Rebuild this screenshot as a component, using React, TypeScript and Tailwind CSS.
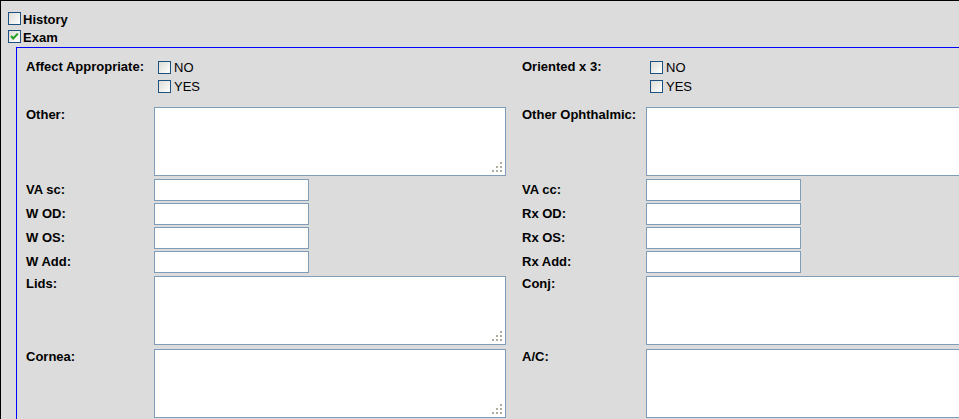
import React from "react";

function Box({ checked = false }: { checked?: boolean }) {
  return (
    <span className="w-[13px] h-[13px] shrink-0 border border-[#1c5180] bg-gradient-to-br from-[#dcdcd7] to-[#ffffff] flex items-center justify-center">
      {checked && (
        <svg width="11" height="11" viewBox="0 0 11 11">
          <polyline points="2,5 4.2,7.5 8.8,2.6" fill="none" stroke="#21a121" strokeWidth="2" />
        </svg>
      )}
    </span>
  );
}

function Grip() {
  const dots = [
    [8, 0],
    [4, 4],
    [8, 4],
    [0, 8],
    [4, 8],
    [8, 8],
  ];
  return (
    <svg className="absolute right-[3px] bottom-[3px]" width="10" height="10" viewBox="0 0 10 10">
      {dots.map(([x, y], i) => (
        <rect key={i} x={x} y={y} width="2" height="2" fill="#b0ad9e" />
      ))}
    </svg>
  );
}

function Area({ grip = true }: { grip?: boolean }) {
  return (
    <div className="relative w-[352px] h-[69px] shrink-0 border border-[#7f9db9] bg-white">
      <textarea className="w-full h-full resize-none outline-none bg-transparent block" />
      {grip && <Grip />}
    </div>
  );
}

function Input() {
  return (
    <input
      type="text"
      className="block w-[155px] h-[22px] border border-[#7f9db9] bg-white outline-none"
    />
  );
}

function Option({ text }: { text: string }) {
  return (
    <div className="flex items-start gap-[3px] h-[19px]">
      <span className="mt-[3px]">
        <Box />
      </span>
      <span className="mt-[3px] leading-[14px]">{text}</span>
    </div>
  );
}

const L = "w-[128px] shrink-0 font-bold leading-[14px]";
const R = "w-[124px] shrink-0 font-bold leading-[14px]";
const F = "w-[368px] shrink-0";

function InputRow({ l, r, first = false }: { l: string; r: string; first?: boolean }) {
  return (
    <div className={`flex h-[22px] ${first ? "mt-[3px]" : "mt-[2px]"}`}>
      <div className={`${L} pt-[4px]`}>{l}</div>
      <div className={F}>
        <Input />
      </div>
      <div className={`${R} pt-[4px]`}>{r}</div>
      <div>
        <Input />
      </div>
    </div>
  );
}

function AreaRow({ l, r, mt }: { l: string; r: string; mt: string }) {
  return (
    <div className={`flex h-[69px] ${mt}`}>
      <div className={`${L} pt-[1px]`}>{l}</div>
      <div className={F}>
        <Area />
      </div>
      <div className={`${R} pt-[1px]`}>{r}</div>
      <div>
        <Area grip={false} />
      </div>
    </div>
  );
}

export default function App() {
  return (
    <div className="w-[959px] h-[419px] overflow-hidden bg-[#dcdcdc] border-t border-l border-black font-['Liberation_Sans',Arial,sans-serif] text-[13px] text-black">
      <div className="pt-[8px] pl-[7px]">
        <div className="flex items-start gap-[2px] h-[18px]">
          <span className="mt-[3px]">
            <Box />
          </span>
          <span className="mt-[4px] leading-[14px] font-bold">History</span>
        </div>
        <div className="flex items-start gap-[2px] h-[18px]">
          <span className="mt-[3px]">
            <Box checked />
          </span>
          <span className="mt-[4px] leading-[14px] font-bold">Exam</span>
        </div>
      </div>
      <div className="ml-[15px] mt-[2px] border-t border-l border-[#0000ff] pt-[10px] pl-[9px] h-[400px] w-[1200px]">
        <div className="flex h-[49px]">
          <div className={`${L} pt-[2px]`}>Affect Appropriate:</div>
          <div className={`${F} pl-[4px]`}>
            <Option text="NO" />
            <Option text="YES" />
          </div>
          <div className={`${R} pt-[2px]`}>Oriented x 3:</div>
          <div className="pl-[4px]">
            <Option text="NO" />
            <Option text="YES" />
          </div>
        </div>
        <AreaRow l="Other:" r="Other Ophthalmic:" mt="" />
        <InputRow l="VA sc:" r="VA cc:" first />
        <InputRow l="W OD:" r="Rx OD:" />
        <InputRow l="W OS:" r="Rx OS:" />
        <InputRow l="W Add:" r="Rx Add:" />
        <AreaRow l="Lids:" r="Conj:" mt="mt-[3px]" />
        <AreaRow l="Cornea:" r="A/C:" mt="mt-[4px]" />
      </div>
    </div>
  );
}
